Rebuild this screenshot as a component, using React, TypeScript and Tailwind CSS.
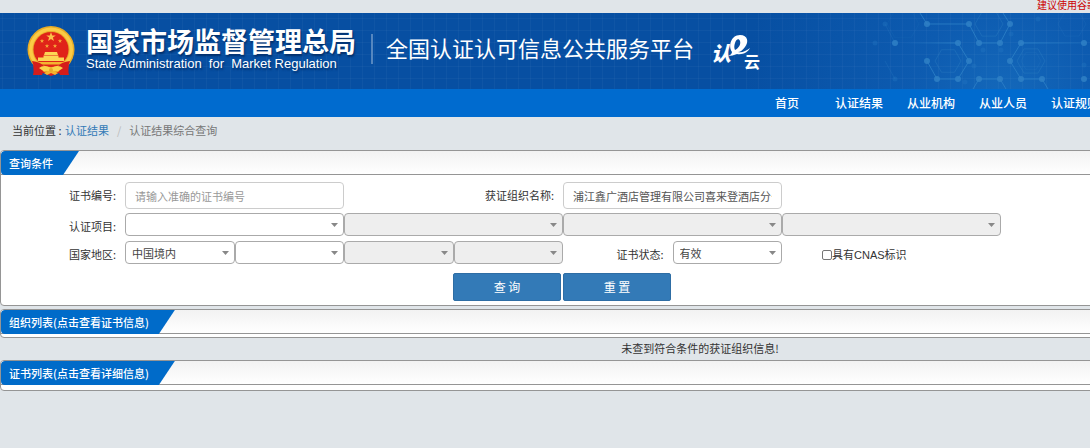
import { useState } from "react";
import type { ReactNode } from "react";

const menus = ["首页", "认证结果", "从业机构", "从业人员", "认证规则"];

const starPoints = (cx: number, cy: number, r: number) =>
  Array.from({ length: 10 }, (_, i) => {
    const len = i % 2 === 0 ? r : r * 0.4;
    const angle = (Math.PI / 5) * i - Math.PI / 2;
    return `${cx + len * Math.cos(angle)},${cy + len * Math.sin(angle)}`;
  }).join(" ");

const hexPoints = (cx: number, cy: number, r: number) =>
  Array.from({ length: 6 }, (_, i) => {
    const angle = (Math.PI / 3) * i;
    return `${cx + r * Math.cos(angle)},${cy + r * Math.sin(angle)}`;
  }).join(" ");

function Emblem() {
  return (
    <svg width="48" height="50" viewBox="0 0 48 50" className="shrink-0" aria-hidden="true">
      <path d="M6 33 L7 49 L16 47 L24 50 L32 47 L41 49 L42 33 Z" fill="#d8201c" />
      <circle cx="24" cy="23.5" r="23.5" fill="#e8ab25" />
      <circle cx="24" cy="23.5" r="22" fill="#fbcb45" />
      <circle cx="24" cy="23.5" r="18.500" fill="#e9a92a" />
      <circle cx="24" cy="23.5" r="17.500" fill="#e02319" />
      <polygon points={starPoints(24, 11, 5)} fill="#fbc04a" />
      <polygon points={starPoints(15, 15, 2.3)} fill="#f5a93a" />
      <polygon points={starPoints(33, 15, 2.3)} fill="#f5a93a" />
      <polygon points={starPoints(20, 20, 2.3)} fill="#f5a93a" />
      <polygon points={starPoints(28, 20, 2.3)} fill="#f5a93a" />
      <path d="M18 26h12l1 3h-14z M16.500 29.500h15v2h-15z M11 31.500h26v3.500H11z" fill="#fcd654" />
      <path d="M7 36h34l-3 2.500H10z" fill="#f3b52f" />
      <path d="M5 35 Q14 36 18 41 L15 49 L6 49 Q8 42 5 35Z M43 35 Q34 36 30 41 L33 49 L42 49 Q40 42 43 35Z" fill="#d51d1b" />
      <path d="M12 42 Q17 38 24 42 Q31 38 36 42 L31 45.500 L27 44 L24 46 L21 44 L17 45.500Z" fill="#fbd24a" />
      <path d="M17 47 Q24 42 31 47 L28 49 L24 47 L20 49Z" fill="#f3b52f" />
      <circle cx="24" cy="44" r="2" fill="#e9a92a" />
    </svg>
  );
}

function CloudLogo() {
  return (
    <svg width="50" height="40" viewBox="0 0 50 40" className="shrink-0 overflow-visible" aria-label="认e云" role="img">
      <g fill="#fff" fontFamily="'Noto Sans CJK SC', sans-serif">
        <text x="0" y="30" fontSize="20" fontWeight="900" fontStyle="italic">认</text>
        <text x="33" y="37" fontSize="16" fontWeight="700">云</text>
      </g>
      <path
        fillRule="evenodd"
        fill="#fff"
        d="M21 21 C17 15 20 4 29 4 C37 4 38 11 34 16 C32 19 29 21 27 21 C31 22 35 20 39 17 C37 21 32 24 26 23 C23 24 20 25 17 25 C19 24 21 23 21 21Z M24 19 C28 17 30 13 29 10 C28 7 25 8 24 12 C23 15 23 17 24 19Z"
      />
    </svg>
  );
}

const nodes = [
  [57, 11], [99, 11], [140, 11], [109, 30], [130, 30], [25, 30], [88, 30],
  [57, 48], [99, 48], [67, 66], [88, 66], [109, 66], [130, 66], [151, 30],
  [214, 30], [140, 48], [151, 66], [172, 66], [214, 66],
];
const faintNodes = [[15, 11], [5, 30], [25, 66], [113, 37], [131, 37], [141, 21], [104, 53], [168, 6], [214, 52], [95, 69]];

function Molecules() {
  return (
    <svg width="220" height="76" viewBox="0 0 220 76" className="absolute top-0 left-[870px]" aria-hidden="true">
      <defs>
        <linearGradient id="fadeL" gradientUnits="userSpaceOnUse" x1="30" y1="0" x2="90" y2="0">
          <stop offset="0" stopColor="#2f8cd0" stopOpacity="0" />
          <stop offset="1" stopColor="#3a94d4" stopOpacity="0.8" />
        </linearGradient>
        <linearGradient id="fadeR" gradientUnits="userSpaceOnUse" x1="150" y1="0" x2="214" y2="0">
          <stop offset="0" stopColor="#3a94d4" stopOpacity="0.8" />
          <stop offset="1" stopColor="#2f8cd0" stopOpacity="0.3" />
        </linearGradient>
      </defs>
      <g fill="none" stroke="#2f83c8" strokeOpacity="0.75">
        <path d="M50 0 L57 11 H99 L109 30 H130 L140 11 L133 0" />
        <path d="M30 30 H88" stroke="url(#fadeL)" />
        <path d="M88 30 L99 48 L88 66 H67 L57 48" />
        <path d="M151 30 H214" stroke="url(#fadeR)" />
        <path d="M151 30 L140 48 L151 66 H172 L178 76" />
        <path d="M103 76 L109 66 H130 L136 76" />
      </g>
      <g fill="none" stroke="#3587c8" strokeOpacity="0.3">
        <polygon points={hexPoints(78, 48, 13)} />
        <polygon points={hexPoints(119, 11, 14)} />
        <polygon points={hexPoints(161, 48, 14)} />
        <polygon points={hexPoints(161, 48, 10)} strokeOpacity="0.15" />
        <polygon points={hexPoints(33, 11, 16)} strokeOpacity="0.1" />
        <polygon points={hexPoints(202, 11, 14)} strokeOpacity="0.15" />
        <path d="M15 11 L25 30 M15 48 L25 66" strokeOpacity="0.2" />
      </g>
      {nodes.map(([x, y]) => (
        <circle key={`${x}-${y}`} cx={x} cy={y} r="3" fill="#2f80c6" fillOpacity="0.85" />
      ))}
      {faintNodes.map(([x, y]) => (
        <circle key={`${x}-${y}`} cx={x} cy={y} r="2.500" fill="#2478c4" fillOpacity="0.35" />
      ))}
    </svg>
  );
}

type SelectProps = {
  label: string;
  options?: string[];
  disabled?: boolean;
  wide?: boolean;
  id?: string;
};

function Select({ label, options = [""], disabled, wide, id }: SelectProps) {
  return (
    <div className={wide ? "relative col-span-2" : "relative"}>
      <select
        id={id}
        aria-label={label}
        disabled={disabled}
        className="block h-[23px] w-full appearance-none rounded border border-[#aaa] bg-white pr-5 pl-[6px] text-[#444] disabled:bg-[#eee] disabled:opacity-100"
      >
        {options.map((o) => (
          <option key={o}>{o}</option>
        ))}
      </select>
      <svg width="7" height="4" viewBox="0 0 7 4" className="pointer-events-none absolute top-[10px] right-[6px]" aria-hidden="true">
        <path d="M0 0h7L3.500 4z" fill="#888" />
      </svg>
    </div>
  );
}

function Panel({ title, children }: { title: string; children?: ReactNode }) {
  return (
    <section className="overflow-hidden rounded border border-[#959595] bg-white">
      <div className="flex h-6 border-b border-[#959595] bg-linear-to-b from-[#f2f2f2] to-white">
        <h2 className="h-6 rounded-l bg-[#006bc9] pr-[26px] pl-2 leading-6 font-medium text-white [clip-path:polygon(0_0,100%_0,calc(100%-16px)_100%,0_100%)]">
          {title}
        </h2>
      </div>
      {children}
    </section>
  );
}

export default function App() {
  const [certNo, setCertNo] = useState("");
  const [orgName, setOrgName] = useState("浦江鑫广酒店管理有限公司喜来登酒店分公司");
  const [cnas, setCnas] = useState(false);

  const reset = () => {
    setCertNo("");
    setOrgName("");
    setCnas(false);
  };

  return (
    <div className="min-h-screen overflow-hidden bg-[#e0e5e9] font-['Noto_Sans_CJK_SC',sans-serif] text-[11px] leading-4 text-[#333]">
      <div className="min-w-[1400px]">
        <div className="flex h-[13px] items-center overflow-hidden pl-[1037px] text-[10px] leading-none text-[#c00]">
          <span className="pb-1">建议使用谷歌浏览器</span>
        </div>

        <header className="relative h-[76px] bg-[#074fa2] bg-[radial-gradient(circle_at_1005px_80px,#1468ba_0,#0d5bb0_90px,transparent_260px)]">
          <div className="flex h-full items-center bg-[linear-gradient(to_right,#ffffff08_1px,transparent_1px),linear-gradient(to_bottom,#ffffff08_1px,transparent_1px)] bg-[size:12px_12px] bg-[position:2px_5px] pl-[27px] text-white">
            <Emblem />
            <div className="ml-[11px] pb-1 text-shadow-[1px_2px_2px_#022f6b]">
              <h1 className="text-[27px] leading-[30px] font-bold">国家市场监督管理总局</h1>
              <p className="font-['Liberation_Sans',Arial,sans-serif] text-[13px] leading-4 whitespace-pre">
                {"State Administration  for  Market Regulation"}
              </p>
            </div>
            <div className="mb-1 ml-[15px] h-[30px] w-0.5 bg-[#5587c0]" />
            <div className="ml-[13px] pb-2 text-[22px] leading-8">全国认证认可信息公共服务平台</div>
            <div className="ml-[17px]">
              <CloudLogo />
            </div>
          </div>
          <Molecules />
        </header>

        <nav className="flex h-7 bg-[#006bcf] pl-[751px]">
          {menus.map((m) => (
            <a key={m} href="#" className="w-[72px] text-center text-xs leading-7 font-medium text-white">
              {m}
            </a>
          ))}
        </nav>

        <div className="flex h-[33px] items-center px-3 pb-2">
          <span>当前位置 :&nbsp;</span>
          <a href="#" className="ml-px text-[#337ab7]">认证结果</a>
          <span className="px-2 text-[#bbb]">/</span>
          <span className="text-[#777]">认证结果综合查询</span>
        </div>

        <main>
          <Panel title="查询条件">
            <form className="pt-[7px] pb-1" onSubmit={(e) => e.preventDefault()}>
              <div className="flex">
                <label htmlFor="certNo" className="w-[124px] pr-[9px] text-right leading-[27px]">证书编号:</label>
                <div className="grid w-[876px] grid-cols-8">
                  <input
                    id="certNo"
                    value={certNo}
                    onChange={(e) => setCertNo(e.target.value)}
                    placeholder="请输入准确的证书编号"
                    className="col-span-2 h-[27px] rounded border border-[#ccc] px-[9px] text-[#555] placeholder:text-[#999]"
                  />
                  <label htmlFor="orgName" className="col-span-2 pr-[9px] text-right leading-[27px]">获证组织名称:</label>
                  <input
                    id="orgName"
                    value={orgName}
                    onChange={(e) => setOrgName(e.target.value)}
                    className="col-span-2 h-[27px] rounded border border-[#ccc] px-[9px] text-[#555]"
                  />
                </div>
              </div>

              <div className="mt-1 flex">
                <label htmlFor="project" className="w-[124px] pr-[9px] text-right leading-[27px]">认证项目:</label>
                <div className="grid w-[876px] grid-cols-8">
                  <Select wide id="project" label="认证项目" />
                  <Select wide disabled label="认证项目二级" />
                  <Select wide disabled label="认证项目三级" />
                  <Select wide disabled label="认证项目四级" />
                </div>
              </div>

              <div className="mt-px flex">
                <label htmlFor="country" className="w-[124px] pr-[9px] text-right leading-[27px]">国家地区:</label>
                <div className="grid w-[876px] grid-cols-8">
                  <Select id="country" label="国家地区" options={["中国境内", "中国境外"]} />
                  <Select label="省" />
                  <Select disabled label="市" />
                  <Select disabled label="区县" />
                  <label htmlFor="status" className="pr-[9px] text-right leading-[27px]">证书状态:</label>
                  <Select id="status" label="证书状态" options={["有效", "暂停", "撤销"]} />
                  <label className="col-span-2 flex items-center pl-10 font-['Liberation_Sans','Noto_Sans_CJK_SC',sans-serif]">
                    <input
                      type="checkbox"
                      checked={cnas}
                      onChange={(e) => setCnas(e.target.checked)}
                      className="size-2.5 appearance-none rounded-xs border border-[#767676] bg-white checked:bg-[#337ab7]"
                    />
                    具有CNAS标识
                  </label>
                </div>
              </div>

              <div className="mt-[5px] flex gap-0.5 pl-[452px]">
                <button type="submit" className="h-7 w-[108px] rounded-xs border border-[#2e6da4] bg-[#337ab7] text-xs text-white">
                  查 询
                </button>
                <button type="button" onClick={reset} className="h-7 w-[108px] rounded-xs border border-[#2e6da4] bg-[#337ab7] text-xs text-white">
                  重 置
                </button>
              </div>
            </form>
          </Panel>

          <div className="mt-[3px]">
            <Panel title="组织列表(点击查看证书信息)">
              <div className="h-[3px]" />
            </Panel>
          </div>
          <p className="h-[22px] text-center leading-5">未查到符合条件的获证组织信息!</p>
          <Panel title="证书列表(点击查看详细信息)">
            <div className="h-[5px]" />
          </Panel>
        </main>
      </div>
    </div>
  );
}
